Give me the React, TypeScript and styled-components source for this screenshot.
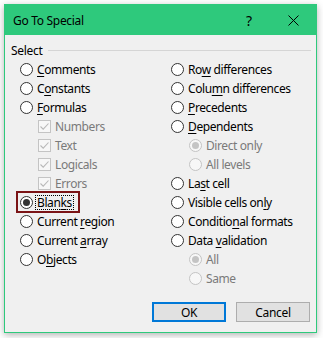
import React from "react";
import styled, { createGlobalStyle } from "styled-components";

const Global = createGlobalStyle`
  html, body { margin: 0; padding: 0; background: #ffffff; }
  body { font-family: "Noto Sans", "Open Sans", sans-serif; font-size: 12px; color: #000; }
`;

const Page = styled.div`
  width: 323px;
  height: 338px;
  padding: 4px 0 0 4px;
  box-sizing: border-box;
`;

const Window = styled.div`
  width: 313px;
  height: 329px;
  box-sizing: border-box;
  border: 1px solid #2ec97c;
  background: #f0f0f0;
  box-shadow: 0 2px 7px rgba(0, 0, 0, 0.3);
  display: flex;
  flex-direction: column;
`;

const TitleBar = styled.div`
  height: 30px;
  background: #2ec97c;
  display: flex;
  align-items: center;
  padding-left: 8px;
`;

const Title = styled.div`
  flex: 1;
  font-size: 12px;
  letter-spacing: -0.3px;
`;

const TitleButton = styled.div<{ $w: number; $shift?: number }>`
  width: ${(p) => p.$w}px;
  height: 30px;
  box-sizing: border-box;
  padding-left: ${(p) => p.$shift ?? 0}px;
  display: flex;
  align-items: center;
  justify-content: center;
  font-size: 14px;
`;

const Body = styled.div`
  flex: 1;
  display: flex;
  flex-direction: column;
  padding: 7px 5px 0 6px;
`;

const GroupHeader = styled.div`
  display: flex;
  align-items: center;
  gap: 5px;
  height: 16px;
  letter-spacing: -0.3px;
`;

const GroupLine = styled.div`
  flex: 1;
  height: 1px;
  background: #d5d5d5;
`;

const Columns = styled.div`
  display: grid;
  grid-template-columns: 151px 1fr;
  padding: 2px 0 0 9px;
`;

const Column = styled.div`
  display: flex;
  flex-direction: column;
`;

const Row = styled.div<{ $indent?: boolean; $disabled?: boolean }>`
  position: relative;
  height: 19px;
  display: flex;
  align-items: center;
  padding-left: ${(p) => (p.$indent ? 18 : 0)}px;
  color: ${(p) => (p.$disabled ? "#7a7a7a" : "#000")};
  white-space: nowrap;
  letter-spacing: -0.4px;
`;

const Radio = styled.span<{ $checked?: boolean; $disabled?: boolean }>`
  width: 13px;
  height: 13px;
  box-sizing: border-box;
  border-radius: 50%;
  border: 1px solid ${(p) => (p.$disabled ? "#c4c4c4" : "#333")};
  background: ${(p) => (p.$disabled ? "#f7f7f7" : "#fff")};
  margin-right: 4px;
  display: flex;
  align-items: center;
  justify-content: center;
  flex: none;
  &::after {
    content: "";
    display: ${(p) => (p.$checked ? "block" : "none")};
    width: 7px;
    height: 7px;
    border-radius: 50%;
    background: ${(p) => (p.$disabled ? "#c4c4c4" : "#333")};
  }
`;

const Check = styled.span`
  width: 13px;
  height: 13px;
  box-sizing: border-box;
  border: 1px solid #c4c4c4;
  background: #f7f7f7;
  margin-right: 4px;
  flex: none;
  display: flex;
  align-items: center;
  justify-content: center;
`;

const Key = styled.span`
  text-decoration: underline;
  text-underline-offset: 2px;
`;

const Focus = styled.span`
  outline: 1px dotted #000;
  outline-offset: 0px;
  padding: 0 1px;
  margin-left: -1px;
  line-height: 13px;
`;

const Highlight = styled.div`
  position: absolute;
  left: -4px;
  top: -2px;
  width: 64px;
  height: 22px;
  box-sizing: border-box;
  border: 2px solid #7b1416;
  pointer-events: none;
`;

const Buttons = styled.div`
  display: flex;
  justify-content: flex-end;
  gap: 10px;
  margin-top: 14px;
  padding-right: 1px;
`;

const Button = styled.div<{ $primary?: boolean }>`
  width: 74px;
  height: 20px;
  box-sizing: border-box;
  background: #e1e1e1;
  border: ${(p) => (p.$primary ? "2px solid #0078d7" : "1px solid #adadad")};
  display: flex;
  align-items: center;
  justify-content: center;
  font-size: 12px;
  letter-spacing: -0.3px;
`;

const CheckMark = () => (
  <svg width="11" height="11" viewBox="0 0 11 11">
    <path d="M1.5 5.5 L4.2 8.2 L9.5 2.5" fill="none" stroke="#b8b8b8" strokeWidth="1.1" />
  </svg>
);

const Label = ({ text, k }: { text: string; k?: number }) => {
  if (k === undefined) return <span>{text}</span>;
  return (
    <span>
      {text.slice(0, k)}
      <Key>{text[k]}</Key>
      {text.slice(k + 1)}
    </span>
  );
};

type Item =
  | { kind: "radio"; text: string; k?: number; indent?: boolean; disabled?: boolean; checked?: boolean }
  | { kind: "check"; text: string };

const left: Item[] = [
  { kind: "radio", text: "Comments", k: 0 },
  { kind: "radio", text: "Constants", k: 1 },
  { kind: "radio", text: "Formulas", k: 0 },
  { kind: "check", text: "Numbers" },
  { kind: "check", text: "Text" },
  { kind: "check", text: "Logicals" },
  { kind: "check", text: "Errors" },
  { kind: "radio", text: "Blanks", k: 4, checked: true },
  { kind: "radio", text: "Current region", k: 8 },
  { kind: "radio", text: "Current array", k: 8 },
  { kind: "radio", text: "Objects", k: 1 },
];

const right: Item[] = [
  { kind: "radio", text: "Row differences", k: 2 },
  { kind: "radio", text: "Column differences", k: 4 },
  { kind: "radio", text: "Precedents", k: 0 },
  { kind: "radio", text: "Dependents", k: 0 },
  { kind: "radio", text: "Direct only", indent: true, disabled: true, checked: true },
  { kind: "radio", text: "All levels", indent: true, disabled: true },
  { kind: "radio", text: "Last cell", k: 2 },
  { kind: "radio", text: "Visible cells only", k: 16 },
  { kind: "radio", text: "Conditional formats", k: 8 },
  { kind: "radio", text: "Data validation", k: 5 },
  { kind: "radio", text: "All", indent: true, disabled: true, checked: true },
  { kind: "radio", text: "Same", indent: true, disabled: true },
];

const renderItem = (it: Item) => {
  if (it.kind === "check") {
    return (
      <Row key={it.text} $indent $disabled>
        <Check>
          <CheckMark />
        </Check>
        <span>{it.text}</span>
      </Row>
    );
  }
  const isBlanks = it.text === "Blanks";
  return (
    <Row key={it.text} $indent={it.indent} $disabled={it.disabled}>
      <Radio $checked={it.checked} $disabled={it.disabled} />
      {isBlanks ? (
        <Focus>
          <Label text={it.text} k={it.k} />
        </Focus>
      ) : (
        <Label text={it.text} k={it.k} />
      )}
      {isBlanks && <Highlight />}
    </Row>
  );
};

export default function App() {
  return (
    <>
      <Global />
      <Page>
        <Window>
          <TitleBar>
            <Title>Go To Special</Title>
            <TitleButton $w={46} $shift={4}>?</TitleButton>
            <TitleButton $w={46}>
              <svg width="11" height="11" viewBox="0 0 11 11">
                <path d="M0.5 0.5 L10.5 10.5 M10.5 0.5 L0.5 10.5" stroke="#000" strokeWidth="1" />
              </svg>
            </TitleButton>
          </TitleBar>
          <Body>
            <GroupHeader>
              <span>Select</span>
              <GroupLine />
            </GroupHeader>
            <Columns>
              <Column>{left.map(renderItem)}</Column>
              <Column>{right.map(renderItem)}</Column>
            </Columns>
            <Buttons>
              <Button $primary>OK</Button>
              <Button>Cancel</Button>
            </Buttons>
          </Body>
        </Window>
      </Page>
    </>
  );
}
